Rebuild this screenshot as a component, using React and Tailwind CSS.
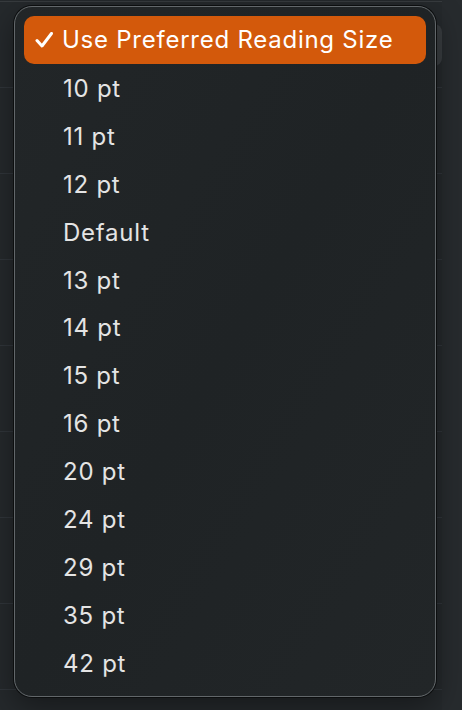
import React from "react";

const items = ["10 pt","11 pt","12 pt","Default","13 pt","14 pt","15 pt","16 pt","20 pt","24 pt","29 pt","35 pt","42 pt"];
const rows = [0,1,2,3,4,5,6,7];

export default function App() {
  return (
    <div className="relative w-[462px] h-[710px] overflow-hidden bg-[#25292c] flex" style={{fontFamily: "Inter, 'Noto Sans', sans-serif"}}>
      <div className="w-[442px] flex flex-col">
        <div className="h-[1px]" />
        <div className="h-[1px] bg-[#373b3e]" />
        {rows.map((r) => (
          <div key={r} className="flex flex-col">
            <div className="h-[85px]" />
            <div className="h-[1px] bg-[#30353a]" />
          </div>
        ))}
      </div>
      <div className="flex-1 bg-[#272b2e]" />

      <div className="absolute left-[418px] top-[24px] w-[24px] h-[42px] rounded-[8px] bg-[#393d40]" />

      <div className="absolute left-[14px] top-[6px] w-[422px] h-[691px] rounded-[18px] border border-[#62676a] shadow-[0_0_0_1px_#0c0e0f,0_10px_30px_rgba(0,0,0,0.4)] bg-gradient-to-br from-[#222628] via-[#1f2325] to-[#222628] p-[9px] flex flex-col">
        <div className="h-[48px] rounded-[10px] bg-[#d3590b] flex items-center text-white text-[24px] tracking-[0.75px] pt-[1px]">
          <div className="w-[38px] flex justify-end pr-[9px]">
            <svg width="18" height="16" viewBox="0 0 18 16" fill="none">
              <path d="M2 8.5 L7 14 L16.5 1.5" stroke="white" strokeWidth="3" strokeLinecap="round" strokeLinejoin="round" />
            </svg>
          </div>
          <span>Use Preferred Reading Size</span>
        </div>
        {items.map((t) => (
          <div key={t} className="h-[48px] flex items-center pl-[39px] pt-[2px] text-[24px] text-[#e4e4e4] tracking-[0.75px]">
            {t}
          </div>
        ))}
      </div>
    </div>
  );
}
